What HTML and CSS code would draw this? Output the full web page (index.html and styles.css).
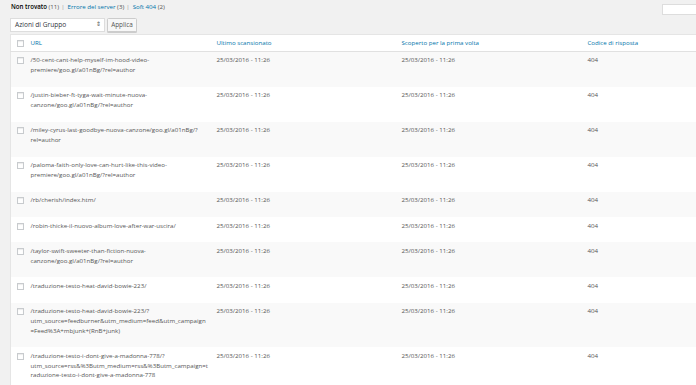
FILE: index.html
```html
<!DOCTYPE html>
<html lang="it">
<head>
<meta charset="utf-8">
<title>Errori di scansione</title>
<link rel="stylesheet" href="styles.css">
</head>
<body>
<div class="page">
  <div class="topbar">
    <ul class="views">
      <li><span class="current">Non trovato</span> <span class="count">(11)</span><span class="sep">|</span></li>
      <li><a href="#">Errore del server</a> <span class="count">(3)</span><span class="sep">|</span></li>
      <li><a href="#">Soft 404</a> <span class="count">(2)</span></li>
    </ul>
    <input class="search" type="search" aria-label="Cerca">
  </div>
  <div class="tablenav">
    <div class="select"><span>Azioni di Gruppo</span><span class="arrows">&#8661;</span></div>
    <button class="btn" type="button">Applica</button>
  </div>
  <table class="list">
    <colgroup>
      <col class="c-cb"><col class="c-url"><col class="c-date1"><col class="c-date2"><col class="c-code">
    </colgroup>
    <thead>
      <tr>
        <th class="cb"><span class="box"></span></th>
        <th>URL</th>
        <th>Ultimo scansionato</th>
        <th>Scoperto per la prima volta</th>
        <th>Codice di risposta</th>
      </tr>
    </thead>
    <tbody>
      <tr class="alt">
        <td class="cb"><span class="box"></span></td>
        <td>/50-cent-cant-help-myself-im-hood-video-<br>premiere/goo.gl/a01nBg/?rel=author</td>
        <td>25/03/2016 - 11:26</td><td>25/03/2016 - 11:26</td><td>404</td>
      </tr>
      <tr>
        <td class="cb"><span class="box"></span></td>
        <td>/justin-bieber-ft-tyga-wait-minute-nuova-<br>canzone/goo.gl/a01nBg/?rel=author</td>
        <td>25/03/2016 - 11:26</td><td>25/03/2016 - 11:26</td><td>404</td>
      </tr>
      <tr class="alt">
        <td class="cb"><span class="box"></span></td>
        <td>/miley-cyrus-last-goodbye-nuova-canzone/goo.gl/a01nBg/?<br>rel=author</td>
        <td>25/03/2016 - 11:26</td><td>25/03/2016 - 11:26</td><td>404</td>
      </tr>
      <tr>
        <td class="cb"><span class="box"></span></td>
        <td>/paloma-faith-only-love-can-hurt-like-this-video-<br>premiere/goo.gl/a01nBg/?rel=author</td>
        <td>25/03/2016 - 11:26</td><td>25/03/2016 - 11:26</td><td>404</td>
      </tr>
      <tr class="alt">
        <td class="cb"><span class="box"></span></td>
        <td>/rb/cherish/index.htm/</td>
        <td>25/03/2016 - 11:26</td><td>25/03/2016 - 11:26</td><td>404</td>
      </tr>
      <tr>
        <td class="cb"><span class="box"></span></td>
        <td>/robin-thicke-il-nuovo-album-love-after-war-uscira/</td>
        <td>25/03/2016 - 11:26</td><td>25/03/2016 - 11:26</td><td>404</td>
      </tr>
      <tr class="alt">
        <td class="cb"><span class="box"></span></td>
        <td>/taylor-swift-sweeter-than-fiction-nuova-<br>canzone/goo.gl/a01nBg/?rel=author</td>
        <td>25/03/2016 - 11:26</td><td>25/03/2016 - 11:26</td><td>404</td>
      </tr>
      <tr>
        <td class="cb"><span class="box"></span></td>
        <td>/traduzione-testo-heat-david-bowie-223/</td>
        <td>25/03/2016 - 11:26</td><td>25/03/2016 - 11:26</td><td>404</td>
      </tr>
      <tr class="alt">
        <td class="cb"><span class="box"></span></td>
        <td>/traduzione-testo-heat-david-bowie-223/?<br>utm_source=feedburner&amp;utm_medium=feed&amp;utm_campaign<br>=Feed%3A+mbjunk+(RnB+junk)</td>
        <td>25/03/2016 - 11:26</td><td>25/03/2016 - 11:26</td><td>404</td>
      </tr>
      <tr>
        <td class="cb"><span class="box"></span></td>
        <td>/traduzione-testo-i-dont-give-a-madonna-778/?<br>utm_source=rss&amp;%3Butm_medium=rss&amp;%3Butm_campaign=t<br>raduzione-testo-i-dont-give-a-madonna-778</td>
        <td>25/03/2016 - 11:26</td><td>25/03/2016 - 11:26</td><td>404</td>
      </tr>
    </tbody>
  </table>
</div>
</body>
</html>
```

FILE: styles.css
```css
html, body {
  margin: 0;
  padding: 0;
  background: #f1f1f1;
  overflow: hidden;
}
body {
  font-family: "Open Sans", "Liberation Sans", sans-serif;
  font-size: 6.15px;
  line-height: 9.75px;
  color: #555;
}
.page {
  width: 758px;
  padding-left: 10px;
}
.topbar {
  display: flex;
  align-items: flex-start;
  padding-top: 2px;
  height: 13px;
}
.views {
  list-style: none;
  margin: 0 0 0 1px;
  padding: 0;
  display: flex;
}
.views li { white-space: nowrap; }
.views .current { color: #000; font-weight: 600; }
.views a { color: #0073aa; text-decoration: none; }
.views .count { color: #555; }
.views .sep { color: #999; margin: 0 3px 0 2px; }
.search {
  margin: 2px 0 0 auto;
  width: 106px;
  height: 11px;
  box-sizing: border-box;
  border: 1px solid #ddd;
  background: #fff;
  padding: 0;
}
.tablenav {
  display: flex;
  gap: 2px;
  margin-top: 3px;
  height: 14px;
}
.select {
  width: 95px;
  height: 14px;
  box-sizing: border-box;
  background: #fff;
  border: 1px solid #ddd;
  display: flex;
  justify-content: space-between;
  align-items: center;
  padding: 0 3px 0 4px;
  color: #32373c;
  font-size: 6.6px;
}
.select .arrows { font-size: 6px; color: #555; }
.btn {
  height: 14px;
  width: 30px;
  box-sizing: border-box;
  background: #f7f7f7;
  border: 1px solid #ccc;
  border-radius: 1.5px;
  font: inherit;
  font-size: 6.4px;
  color: #555;
  padding: 0;
  box-shadow: 0 1px 0 #ccc;
}
.list {
  margin-top: 2px;
  border-collapse: collapse;
  table-layout: fixed;
  width: 758px;
  background: #fff;
  border: 1px solid #e5e5e5;
}
.c-cb { width: 15px; }
.c-url { width: 186px; }
.c-date1 { width: 185px; }
.c-date2 { width: 186px; }
.c-code { width: 186px; }
th {
  text-align: left;
  font-weight: 400;
  color: #0073aa;
  padding: 3px 5px 3px;
  border-bottom: 1px solid #e1e1e1;
  white-space: nowrap;
}
td {
  vertical-align: top;
  padding: 3.5px 5px 12px;
  white-space: nowrap;
  color: #555;
}
tr.alt td { background: #f9f9f9; }
.cb { padding: 5.5px 0 0 6px; }
th.cb { padding: 4.5px 0 3px 6px; }
.box {
  display: block;
  width: 7px;
  height: 7px;
  box-sizing: border-box;
  border: 1px solid #c8cbce;
  background: #fff;
  box-shadow: inset 0 1px 1px rgba(0,0,0,0.08);
}
```
